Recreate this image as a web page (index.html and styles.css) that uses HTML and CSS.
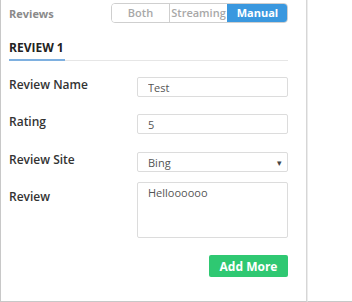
FILE: index.html
```html
<!DOCTYPE html>
<html lang="en">
<head>
    <meta charset="UTF-8">
    <title>Reviews</title>
    <link rel="stylesheet" href="styles.css">
</head>
<body>
    <div class="layout">
        <!-- Reviews panel -->
        <div class="panel">
            <div class="panel-header">
                <span class="panel-title">Reviews</span>
                <div class="toggle">
                    <button class="toggle-btn">Both</button>
                    <button class="toggle-btn">Streaming</button>
                    <button class="toggle-btn active">Manual</button>
                </div>
            </div>

            <div class="tabs">
                <span class="tab active">REVIEW 1</span>
            </div>

            <form class="review-form">
                <div class="form-row">
                    <label class="form-label">Review Name</label>
                    <input class="form-input" type="text" value="Test">
                </div>
                <div class="form-row">
                    <label class="form-label">Rating</label>
                    <input class="form-input" type="text" value="5">
                </div>
                <div class="form-row">
                    <label class="form-label">Review Site</label>
                    <div class="form-select">
                        <span>Bing</span>
                        <span class="caret">&#9662;</span>
                    </div>
                </div>
                <div class="form-row row-review">
                    <label class="form-label">Review</label>
                    <textarea class="form-input form-textarea">Helloooooo</textarea>
                </div>
                <div class="form-actions">
                    <button type="button" class="btn-add">Add More</button>
                </div>
            </form>
        </div>

        <!-- Empty side area -->
        <div class="side"></div>
    </div>
</body>
</html>
```

FILE: styles.css
```css
* {
    margin: 0;
    padding: 0;
    box-sizing: border-box;
}

body {
    font-family: 'Open Sans', 'Liberation Sans', sans-serif;
    background: #fff;
    color: #333;
}

.layout {
    display: flex;
    height: 302px;
}

/* Panel */
.panel {
    width: 307px;
    flex: none;
    border-left: 1px solid #c8c8c8;
    border-bottom: 1px solid #c8c8c8;
    border-right: 1px solid #d6d6d6;
    padding: 3px 18px 0 8px;
}

.side {
    flex: 1;
    border-left: 1px solid #ececec;
    border-bottom: 1px solid #c8c8c8;
}

.panel-header {
    display: flex;
    justify-content: space-between;
    align-items: center;
    height: 20px;
}

.panel-title {
    font-size: 11px;
    font-weight: 700;
    color: #8a8a8a;
}

/* Toggle */
.toggle {
    display: flex;
    height: 20px;
    border: 1px solid #cfcfcf;
    border-radius: 4px;
    overflow: hidden;
}

.toggle-btn {
    font-family: inherit;
    font-size: 11px;
    font-weight: 600;
    color: #a8a8a8;
    background: #fff;
    border: none;
    border-left: 1px solid #cfcfcf;
    width: 58px;
    line-height: 18px;
}

.toggle-btn:first-child {
    border-left: none;
    width: 57px;
}

.toggle-btn.active {
    background: #3a98df;
    color: #fff;
    font-weight: 700;
    width: 60px;
    border-left-color: #3a98df;
}

/* Tabs */
.tabs {
    margin-top: 17px;
    border-bottom: 1px solid #e6e6e6;
    display: flex;
}

.tab {
    font-size: 12px;
    font-weight: 700;
    color: #222;
    padding: 0 1px 3px 0;
    margin-bottom: -1px;
    border-bottom: 2px solid #7eb0e0;
    line-height: 16px;
}

/* Form */
.review-form {
    padding-top: 16px;
}

.form-row {
    display: flex;
    align-items: flex-start;
    margin-bottom: 17px;
}

.form-row:nth-child(2) {
    margin-bottom: 18px;
}

.form-row:nth-child(3) {
    margin-bottom: 10px;
}

.form-label {
    flex: none;
    width: 128px;
    font-size: 12px;
    font-weight: 600;
    color: #333;
    line-height: 14px;
    padding-top: 1px;
}

.row-review .form-label {
    padding-top: 8px;
}

.form-input,
.form-select {
    flex: 1;
    min-width: 0;
    height: 20px;
    border: 1px solid #dcdcdc;
    border-radius: 2px;
    font-family: inherit;
    font-size: 11px;
    color: #555;
    padding: 0 10px;
    background: #fff;
}

.form-select {
    display: flex;
    justify-content: space-between;
    align-items: center;
    padding-right: 5px;
}

.caret {
    font-size: 9px;
    color: #444;
}

.form-textarea {
    height: 56px;
    resize: none;
    padding-top: 2px;
    line-height: 15px;
}

.form-actions {
    display: flex;
    justify-content: flex-end;
    margin-top: 14px;
}

.btn-add {
    width: 79px;
    height: 22px;
    background: #2fc872;
    border: none;
    border-radius: 2px;
    color: #fff;
    font-family: inherit;
    font-size: 12px;
    font-weight: 700;
}
```
